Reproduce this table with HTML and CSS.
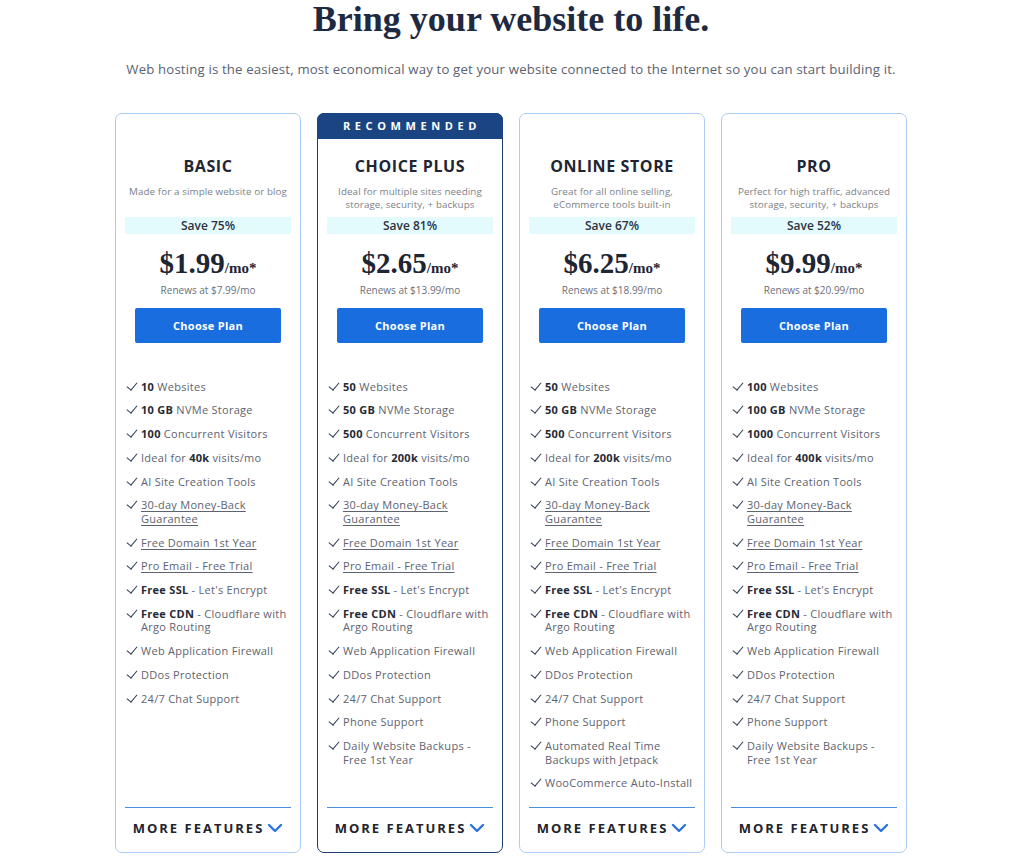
FILE: index.html
```html
<!DOCTYPE html>
<html lang="en">
<head>
<meta charset="utf-8">
<title>Bring your website to life.</title>
<link rel="stylesheet" href="styles.css">
</head>
<body>
<main class="page">
  <h1 class="headline">Bring your website to life.</h1>
  <p class="lead">Web hosting is the easiest, most economical way to get your website connected to the Internet so you can start building it.</p>

  <div class="plans">
    <section class="card">
      <h2 class="title">BASIC</h2>
      <p class="desc">Made for a simple website or blog</p>
      <div class="save">Save 75%</div>
      <div class="price">$1.99<span class="per">/mo*</span></div>
      <div class="renew">Renews at $7.99/mo</div>
      <a class="btn">Choose Plan</a>
      <ul class="features">
        <li><b>10</b> Websites</li>
        <li><b>10 GB</b> NVMe Storage</li>
        <li><b>100</b> Concurrent Visitors</li>
        <li>Ideal for <b>40k</b> visits/mo</li>
        <li>AI Site Creation Tools</li>
        <li><u>30-day Money-Back Guarantee</u></li>
        <li><u>Free Domain 1st Year</u></li>
        <li><u>Pro Email - Free Trial</u></li>
        <li><b>Free SSL</b> - Let's Encrypt</li>
        <li><b>Free CDN</b> - Cloudflare with Argo Routing</li>
        <li>Web Application Firewall</li>
        <li>DDos Protection</li>
        <li>24/7 Chat Support</li>
      </ul>
      <div class="more">MORE FEATURES <svg class="chev" viewBox="0 0 16 10"><path d="M2 2l6 6 6-6" /></svg></div>
    </section>

    <section class="card recommended">
      <div class="badge">RECOMMENDED</div>
      <h2 class="title">CHOICE PLUS</h2>
      <p class="desc">Ideal for multiple sites needing storage, security, + backups</p>
      <div class="save">Save 81%</div>
      <div class="price">$2.65<span class="per">/mo*</span></div>
      <div class="renew">Renews at $13.99/mo</div>
      <a class="btn">Choose Plan</a>
      <ul class="features">
        <li><b>50</b> Websites</li>
        <li><b>50 GB</b> NVMe Storage</li>
        <li><b>500</b> Concurrent Visitors</li>
        <li>Ideal for <b>200k</b> visits/mo</li>
        <li>AI Site Creation Tools</li>
        <li><u>30-day Money-Back Guarantee</u></li>
        <li><u>Free Domain 1st Year</u></li>
        <li><u>Pro Email - Free Trial</u></li>
        <li><b>Free SSL</b> - Let's Encrypt</li>
        <li><b>Free CDN</b> - Cloudflare with Argo Routing</li>
        <li>Web Application Firewall</li>
        <li>DDos Protection</li>
        <li>24/7 Chat Support</li>
        <li>Phone Support</li>
        <li>Daily Website Backups -<br>Free 1st Year</li>
      </ul>
      <div class="more">MORE FEATURES <svg class="chev" viewBox="0 0 16 10"><path d="M2 2l6 6 6-6" /></svg></div>
    </section>

    <section class="card">
      <h2 class="title">ONLINE STORE</h2>
      <p class="desc">Great for all online selling, eCommerce tools built-in</p>
      <div class="save">Save 67%</div>
      <div class="price">$6.25<span class="per">/mo*</span></div>
      <div class="renew">Renews at $18.99/mo</div>
      <a class="btn">Choose Plan</a>
      <ul class="features">
        <li><b>50</b> Websites</li>
        <li><b>50 GB</b> NVMe Storage</li>
        <li><b>500</b> Concurrent Visitors</li>
        <li>Ideal for <b>200k</b> visits/mo</li>
        <li>AI Site Creation Tools</li>
        <li><u>30-day Money-Back Guarantee</u></li>
        <li><u>Free Domain 1st Year</u></li>
        <li><u>Pro Email - Free Trial</u></li>
        <li><b>Free SSL</b> - Let's Encrypt</li>
        <li><b>Free CDN</b> - Cloudflare with Argo Routing</li>
        <li>Web Application Firewall</li>
        <li>DDos Protection</li>
        <li>24/7 Chat Support</li>
        <li>Phone Support</li>
        <li>Automated Real Time Backups with Jetpack</li>
        <li>WooCommerce Auto-Install</li>
      </ul>
      <div class="more">MORE FEATURES <svg class="chev" viewBox="0 0 16 10"><path d="M2 2l6 6 6-6" /></svg></div>
    </section>

    <section class="card">
      <h2 class="title">PRO</h2>
      <p class="desc">Perfect for high traffic, advanced storage, security, + backups</p>
      <div class="save">Save 52%</div>
      <div class="price">$9.99<span class="per">/mo*</span></div>
      <div class="renew">Renews at $20.99/mo</div>
      <a class="btn">Choose Plan</a>
      <ul class="features">
        <li><b>100</b> Websites</li>
        <li><b>100 GB</b> NVMe Storage</li>
        <li><b>1000</b> Concurrent Visitors</li>
        <li>Ideal for <b>400k</b> visits/mo</li>
        <li>AI Site Creation Tools</li>
        <li><u>30-day Money-Back Guarantee</u></li>
        <li><u>Free Domain 1st Year</u></li>
        <li><u>Pro Email - Free Trial</u></li>
        <li><b>Free SSL</b> - Let's Encrypt</li>
        <li><b>Free CDN</b> - Cloudflare with Argo Routing</li>
        <li>Web Application Firewall</li>
        <li>DDos Protection</li>
        <li>24/7 Chat Support</li>
        <li>Phone Support</li>
        <li>Daily Website Backups -<br>Free 1st Year</li>
      </ul>
      <div class="more">MORE FEATURES <svg class="chev" viewBox="0 0 16 10"><path d="M2 2l6 6 6-6" /></svg></div>
    </section>
  </div>
</main>
</body>
</html>
```

FILE: styles.css
```css
* { box-sizing: border-box; }

body {
  margin: 0;
  background: #fff;
  font-family: "Open Sans", "Noto Sans", sans-serif;
  color: #2a2f3a;
}

.page {
  display: flex;
  flex-direction: column;
  align-items: center;
  padding-right: 2px;
}

.headline {
  margin: 0;
  font-family: "Liberation Serif", "DejaVu Serif", serif;
  font-weight: 700;
  font-size: 36px;
  line-height: 38px;
  color: #1e2a42;
}

.lead {
  margin: 21px 0 0;
  font-size: 13.2px;
  line-height: 20px;
  letter-spacing: 0.17px;
  color: #5b6272;
}

.plans {
  margin-top: 34px;
  display: flex;
  gap: 16px;
  align-items: stretch;
}

.card {
  position: relative;
  width: 186px;
  border: 1px solid #a9cdf6;
  border-radius: 7px;
  padding: 42px 9px 0;
  display: flex;
  flex-direction: column;
  text-align: center;
}

.card.recommended {
  border-color: #1d3d70;
}

.badge {
  position: absolute;
  top: -1px;
  left: -1px;
  right: -1px;
  height: 26px;
  border-radius: 7px 7px 0 0;
  background: #1b4582;
  color: #fff;
  font-size: 11px;
  font-weight: 700;
  letter-spacing: 4.6px;
  line-height: 26px;
  text-indent: 4px;
}

.title {
  margin: 0;
  font-size: 16px;
  line-height: 20px;
  font-weight: 700;
  color: #1f2533;
  letter-spacing: 0.6px;
}

.desc {
  margin: 9px 0 0;
  min-height: 26px;
  font-size: 9.8px;
  line-height: 13px;
  letter-spacing: 0.1px;
  color: #7a7f88;
}

.save {
  margin-top: 6px;
  height: 17px;
  background: #e4fbfe;
  font-size: 12px;
  font-weight: 600;
  line-height: 17px;
  color: #2d3340;
}

.price {
  margin-top: 13px;
  font-family: "Liberation Serif", "DejaVu Serif", serif;
  font-weight: 700;
  font-size: 29px;
  line-height: 32px;
  color: #1e2533;
}

.per {
  font-size: 15px;
}

.renew {
  margin-top: 0;
  font-size: 10px;
  line-height: 13px;
  color: #6b707a;
}

.btn {
  display: block;
  margin: 11px 10px 0;
  height: 35px;
  background: #1a6ddf;
  color: #fff;
  font-size: 11px;
  font-weight: 700;
  letter-spacing: 0.3px;
  line-height: 35px;
  border-radius: 2px;
}

.features {
  list-style: none;
  margin: 36.5px 0 17px;
  padding: 0;
  flex: 1;
  display: flex;
  flex-direction: column;
  gap: 10.25px;
  text-align: left;
}

.features li {
  position: relative;
  padding-left: 16px;
  font-size: 11px;
  line-height: 13.5px;
  letter-spacing: 0.28px;
  color: #5d6370;
}

.features li::before {
  content: "";
  position: absolute;
  left: 1px;
  top: 1px;
  width: 5px;
  height: 9px;
  border: solid #2c3a52;
  border-width: 0 1.7px 1.7px 0;
  transform: translate(3px, -1px) rotate(40deg);
}

.features b {
  color: #252a35;
  font-weight: 700;
}

.features u {
  text-decoration-thickness: 1px;
  text-underline-offset: 2px;
}

.more {
  border-top: 1px solid #4a8fe0;
  padding: 12px 0 16px;
  font-size: 13px;
  line-height: 16px;
  font-weight: 700;
  letter-spacing: 2px;
  color: #20242e;
  display: flex;
  justify-content: center;
  align-items: center;
  gap: 3px;
}

.chev {
  width: 16px;
  height: 10px;
  fill: none;
  stroke: #2a74e0;
  stroke-width: 2.4;
  stroke-linecap: round;
  stroke-linejoin: round;
}
```
